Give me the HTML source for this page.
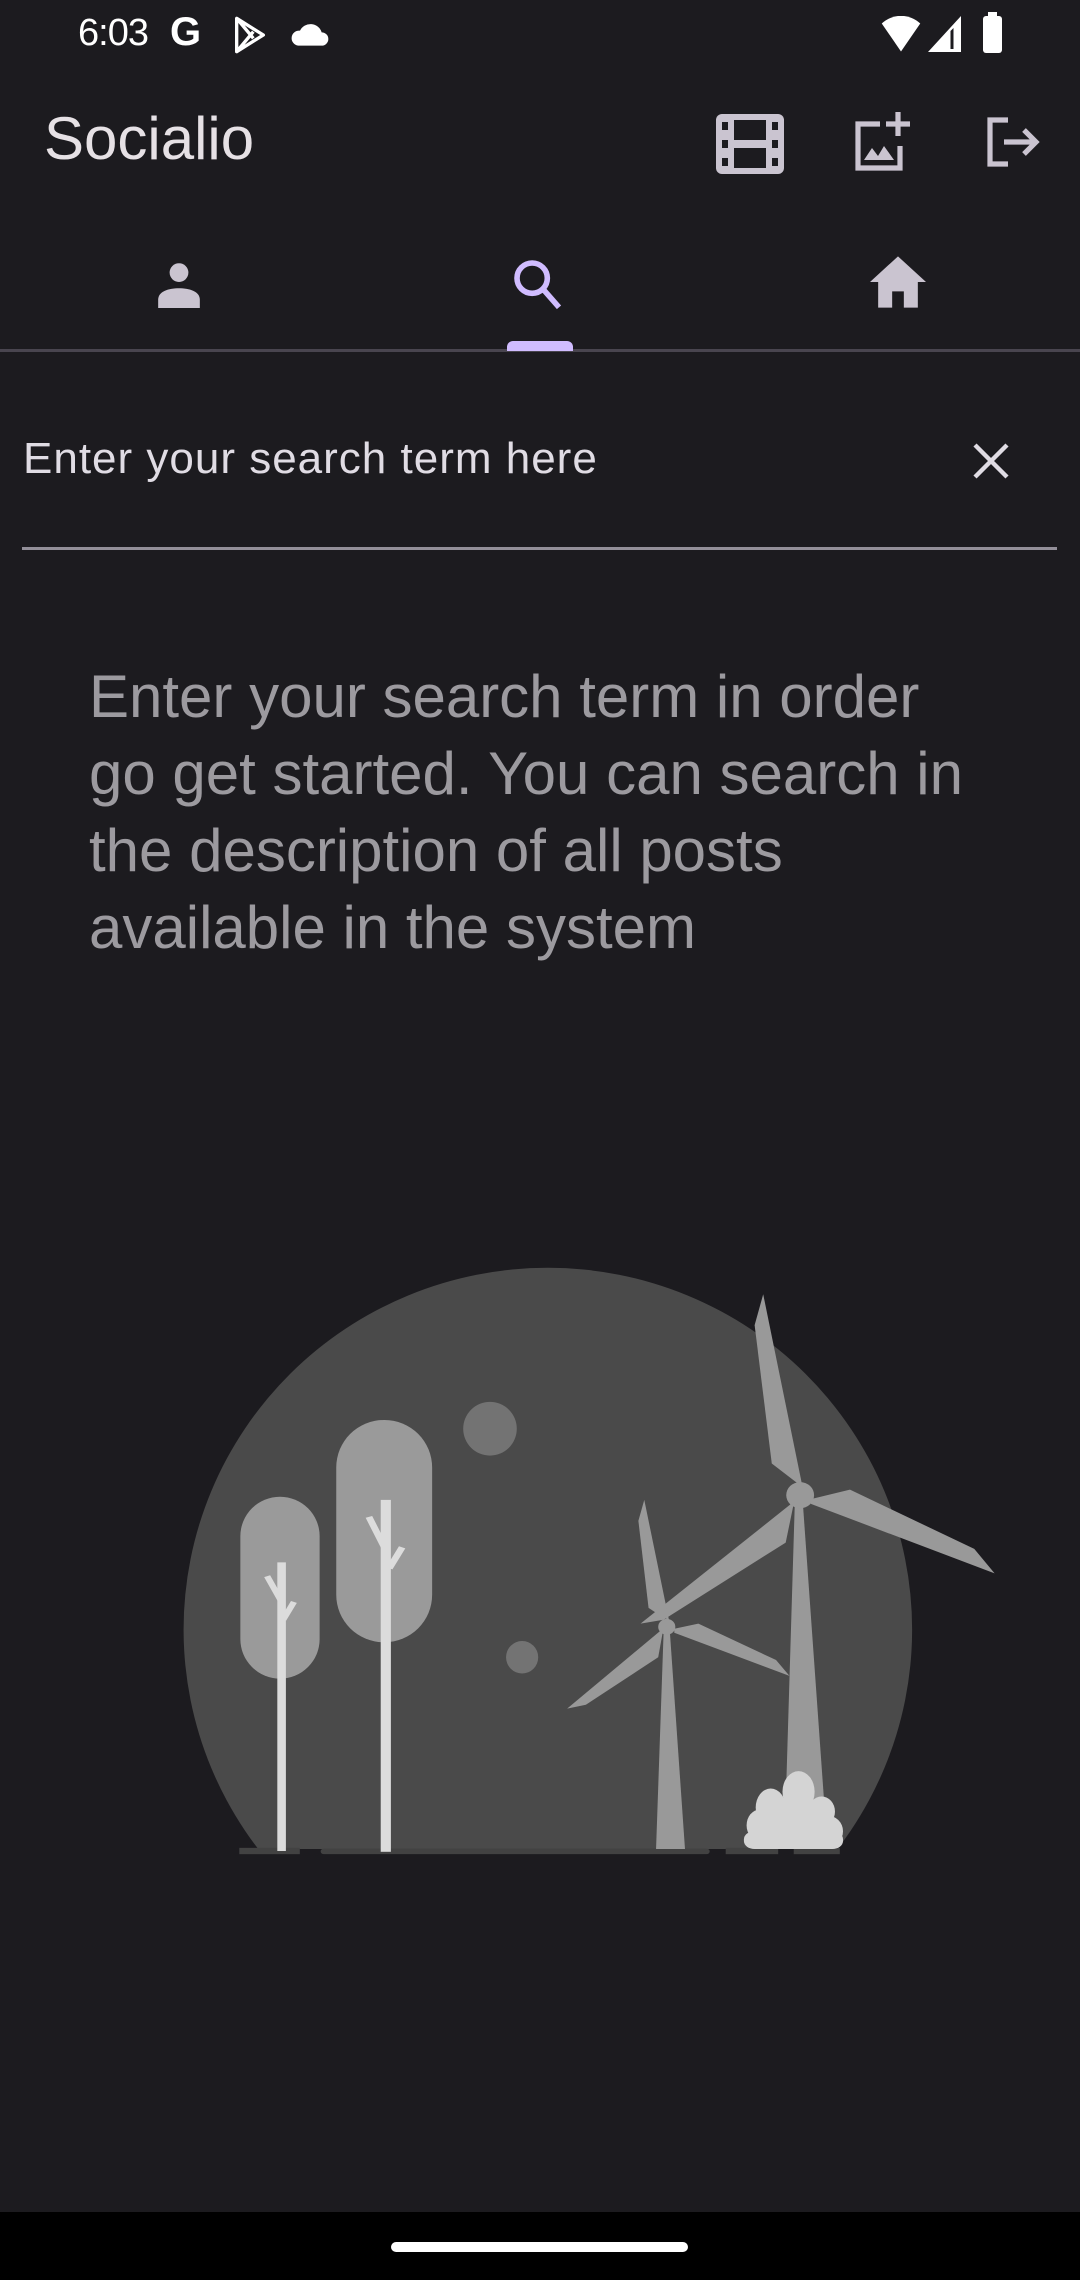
<!DOCTYPE html>
<html><head><meta charset="utf-8"><style>
*{margin:0;padding:0;box-sizing:border-box}
body{width:1080px;height:2280px;background:#1c1b1f;position:relative;overflow:hidden;font-family:"Liberation Sans",sans-serif}
.abs{position:absolute}
.t{white-space:nowrap}
</style></head><body>
<!-- status bar -->
<div class="abs t" style="left:78px;top:12px;font-size:38px;color:#fff;letter-spacing:-1px">6:03</div>
<div class="abs t" style="left:170px;top:10px;font-size:40px;color:#fff;font-weight:bold">G</div>
<svg class="abs" style="left:230px;top:14px" width="40" height="42" viewBox="0 0 24 24"><path d="M4 2 L4 22 L20 12 Z M4 2 L14 14 M4 22 L14 10" fill="none" stroke="#fff" stroke-width="2" stroke-linejoin="round"/></svg>
<svg class="abs" style="left:290px;top:18px" width="40" height="32" viewBox="0 0 24 18"><path d="M5 16 H19 A4 4 0 0 0 19 8 A7 7 0 0 0 6 7 A4.5 4.5 0 0 0 5 16Z" fill="#fff"/></svg>
<svg class="abs" style="left:880px;top:16px" width="42" height="36" viewBox="0 0 24 20"><path d="M12 20 L1 4 A16 16 0 0 1 23 4 Z" fill="#fff"/></svg>
<svg class="abs" style="left:928px;top:16px" width="36" height="36" viewBox="0 0 24 24"><path d="M22 0 V24 H0 Z" fill="#fff"/><path d="M15 10 V22 H17 V8Z" fill="#1c1b1f"/></svg>
<div class="abs" style="left:983px;top:16px;width:19px;height:37px;background:#fff;border-radius:3px"></div>
<div class="abs" style="left:988px;top:12px;width:9px;height:6px;background:#fff"></div>
<!-- app bar -->
<div class="abs t" style="left:44px;top:104px;font-size:60px;color:#e6e1e5">Socialio</div>
<svg class="abs" style="left:716px;top:114px" width="68" height="60" viewBox="0 0 34 30"><rect x="0" y="0" width="34" height="30" rx="3" fill="#cac4d0"/><rect x="9" y="3" width="16" height="10" fill="#1c1b1f"/><rect x="9" y="17" width="16" height="10" fill="#1c1b1f"/><rect x="3" y="4" width="3" height="4" fill="#1c1b1f"/><rect x="3" y="13" width="3" height="4" fill="#1c1b1f"/><rect x="3" y="22" width="3" height="4" fill="#1c1b1f"/><rect x="28" y="4" width="3" height="4" fill="#1c1b1f"/><rect x="28" y="13" width="3" height="4" fill="#1c1b1f"/><rect x="28" y="22" width="3" height="4" fill="#1c1b1f"/></svg>
<svg class="abs" style="left:852px;top:112px" width="60" height="60" viewBox="0 0 30 30"><path d="M14 6 H3 V28 H24 V17" fill="none" stroke="#cac4d0" stroke-width="2.6"/><path d="M23 0 V12 M17 6 H29" stroke="#cac4d0" stroke-width="2.6"/><path d="M6 24 L10 18 L13 22 L16 17 L21 24Z" fill="#cac4d0"/></svg>
<svg class="abs" style="left:986px;top:116px" width="56" height="52" viewBox="0 0 28 26"><path d="M11 2 H2 V24 H11" fill="none" stroke="#cac4d0" stroke-width="2.6"/><path d="M9 13 H25 M19 7 L25 13 L19 19" fill="none" stroke="#cac4d0" stroke-width="2.6"/></svg>
<!-- tabs -->
<svg class="abs" style="left:154px;top:258px" width="50" height="50" viewBox="0 0 24 24"><circle cx="12" cy="7" r="4.5" fill="#cac4d0"/><path d="M2 24 V20 C2 16 7 14.5 12 14.5 C17 14.5 22 16 22 20 V24Z" fill="#cac4d0"/></svg>
<svg class="abs" style="left:510px;top:256px" width="56" height="56" viewBox="0 0 24 24"><circle cx="9.5" cy="9.5" r="6.5" fill="none" stroke="#d0bcff" stroke-width="2.4"/><path d="M14 14 L21 22" stroke="#d0bcff" stroke-width="2.4"/></svg>
<svg class="abs" style="left:870px;top:256px" width="56" height="52" viewBox="0 0 24 22"><path d="M12 0 L24 11 H20.5 V22 H14.5 V15 H9.5 V22 H3.5 V11 H0Z" fill="#cac4d0"/></svg>
<div class="abs" style="left:0;top:349px;width:1080px;height:3px;background:#49454f"></div>
<div class="abs" style="left:507px;top:341px;width:66px;height:10px;background:#d0bcff;border-radius:6px 6px 0 0"></div>
<!-- search field -->
<div class="abs t" style="left:23px;top:434px;font-size:44px;letter-spacing:1px;color:#e0dce4">Enter your search term here</div>
<svg class="abs" style="left:971px;top:441px" width="40" height="40" viewBox="0 0 20 20"><path d="M2 2 L18 18 M18 2 L2 18" stroke="#e0dce4" stroke-width="2.2"/></svg>
<div class="abs" style="left:22px;top:547px;width:1035px;height:3px;background:#938f99"></div>
<!-- body text -->
<div class="abs" style="left:89px;top:658px;font-size:60px;line-height:77px;color:#9c9a9f">
<div class="t">Enter your search term in order</div>
<div class="t">go get started. You can search in</div>
<div class="t">the description of all posts</div>
<div class="t">available in the system</div>
</div>
<!-- illustration -->
<svg class="abs" style="left:0;top:0" width="1080" height="2280" viewBox="0 0 1080 2280">
<defs><clipPath id="c"><rect x="0" y="0" width="2000" height="1515"/></clipPath></defs>
<g transform="translate(160,1250) scale(0.5357,0.3954)">
<ellipse cx="724" cy="960" rx="680" ry="915" fill="#4a4a4a" clip-path="url(#c)"/>
<rect x="148" y="1512" width="113" height="16" fill="#424242"/>
<rect x="300" y="1514" width="726" height="14" rx="6" fill="#424242"/>
<rect x="1056" y="1512" width="98" height="16" fill="#424242"/>
<rect x="1183" y="1512" width="86" height="16" fill="#424242"/>
<ellipse cx="616" cy="452" rx="50" ry="68" fill="#737373"/>
<ellipse cx="676" cy="1030" rx="30" ry="41" fill="#737373"/>
<rect x="150" y="624" width="148" height="460" rx="74" ry="100" fill="#9a9a9a"/>
<rect x="219" y="790" width="16" height="730" fill="#dcdcdc"/>
<path d="M200 825 L225 885 M250 890 L230 935" stroke="#dcdcdc" stroke-width="12"/>
<rect x="329" y="430" width="179" height="562" rx="89" ry="120" fill="#9a9a9a"/>
<rect x="412" y="632" width="19" height="890" fill="#dcdcdc"/>
<path d="M390 675 L420 755 M452 752 L428 805" stroke="#dcdcdc" stroke-width="13"/>
<g fill="#999">
<path d="M1185 640 L1200 640 L1240 1400 L1168 1400Z"/>
<ellipse cx="1195" cy="620" rx="26" ry="33"/>
<path d="M1190 590 L1142 540 L1110 190 L1126 112 L1198 590Z"/>
<path d="M1215 630 L1288 606 L1520 756 L1558 818 L1215 642Z"/>
<path d="M1182 648 L1168 740 L940 935 L897 945 L1180 640Z"/>
<path d="M940 970 L952 970 L980 1515 L926 1515Z"/>
<ellipse cx="946" cy="953" rx="16" ry="20"/>
<path d="M940 930 L912 905 L893 685 L904 632 L950 935Z"/>
<path d="M960 958 L1005 945 L1150 1037 L1175 1077 L960 968Z"/>
<path d="M938 970 L930 1030 L795 1150 L760 1160 L935 962Z"/>
</g>
<g fill="#d4d4d4">
<ellipse cx="1192" cy="1370" rx="30" ry="52"/>
<ellipse cx="1140" cy="1410" rx="28" ry="48"/>
<ellipse cx="1235" cy="1420" rx="25" ry="38"/>
<ellipse cx="1120" cy="1455" rx="25" ry="40"/>
<ellipse cx="1245" cy="1470" rx="30" ry="40"/>
<ellipse cx="1180" cy="1450" rx="60" ry="60"/>
<rect x="1090" y="1470" width="185" height="45" rx="20"/>
</g>
</g>
</svg>
<!-- nav bar -->
<div class="abs" style="left:0;top:2212px;width:1080px;height:68px;background:#000"></div>
<div class="abs" style="left:391px;top:2242px;width:297px;height:10px;background:#fff;border-radius:5px"></div>
</body></html>
